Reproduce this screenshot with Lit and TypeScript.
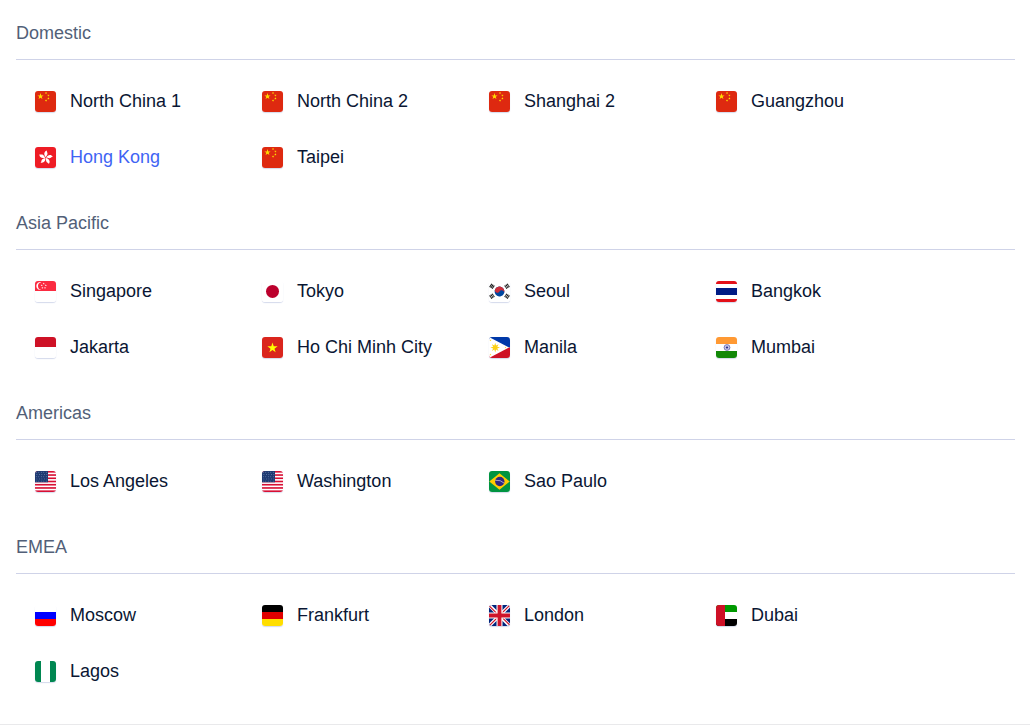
import { LitElement, html, svg, css } from "lit";
import type { SVGTemplateResult } from "lit";
import { customElement, property, state } from "lit/decorators.js";
import { classMap } from "lit/directives/class-map.js";

/** Points of a star around (cx, cy). */
const starPoints = (cx: number, cy: number, r: number, turn = 0, inner = 0.382, spikes = 5): string =>
  Array.from({ length: spikes * 2 }, (_, i) => {
    const radius = i % 2 ? r * inner : r;
    const a = ((i * 180) / spikes - 90 + turn) * (Math.PI / 180);
    return `${(cx + radius * Math.cos(a)).toFixed(2)},${(cy + radius * Math.sin(a)).toFixed(2)}`;
  }).join(" ");

const star = (cx: number, cy: number, r: number, fill: string, turn = 0) =>
  svg`<polygon points=${starPoints(cx, cy, r, turn)} fill=${fill} />`;

const band = (x: number, y: number, w: number, h: number, fill: string) =>
  svg`<rect x=${x} y=${y} width=${w} height=${h} fill=${fill} />`;

const trigram = (cx: number, cy: number, turn: number, broken: boolean) => svg`
  <g transform=${`translate(${cx} ${cy}) rotate(${turn})`} stroke="#1c1c1c" stroke-width="1.1">
    <path d="M-2 -1.5H2M-2 0H2M-2 1.5H2" />
    ${broken ? svg`<path d="M0 -2.1V2.1" stroke="#fff" stroke-width="0.4" />` : ""}
  </g>`;

const FLAGS: Record<string, SVGTemplateResult> = {
  cn: svg`${band(0, 0, 21, 21, "#de2910")}
    ${star(5.5, 5.4, 3.3, "#ffde00")}
    ${star(11, 2, 1.3, "#ffde00", 20)}${star(13.4, 4.4, 1.3, "#ffde00", 40)}
    ${star(13.4, 7.4, 1.3, "#ffde00")}${star(11, 9.6, 1.3, "#ffde00", 20)}`,
  hk: svg`${band(0, 0, 21, 21, "#ee1c25")}
    ${[0, 72, 144, 216, 288].map(
      (a) => svg`<g transform=${`translate(10.7 10.6) rotate(${a + 12})`}>
        <path d="M0 -0.4C-2.6 -2.2 -3.2 -5.6 -0.2 -7.2C-0.6 -5.8 1.2 -5.2 1 -3.6C0.9 -2.3 0.2 -1.8 0 -0.4Z" fill="#fff" />
      </g>`
    )}`,
  sg: svg`${band(0, 0, 21, 21, "#fff")}${band(0, 0, 21, 10, "#fb2b41")}
    <path d="M6.4 1.2A4 4 0 1 0 6.4 8.9A3.88 3.88 0 0 1 6.4 1.2Z" fill="#fff" />
    ${star(8.7, 2.5, 1.1, "#fff")}${star(6.7, 4.3, 1.1, "#fff")}${star(10.8, 4.3, 1.1, "#fff")}
    ${star(7.4, 6.9, 1.1, "#fff")}${star(10, 6.9, 1.1, "#fff")}`,
  jp: svg`${band(0, 0, 21, 21, "#fff")}<circle cx="10.5" cy="10.4" r="6.5" fill="#bc002d" />`,
  kr: svg`${band(0, 0, 21, 21, "#fff")}
    <g transform="rotate(30 10.5 10.5)">
      <circle cx="10.5" cy="10.5" r="4.9" fill="#0047a0" />
      <path d="M5.6 10.5A4.9 4.9 0 0 1 15.4 10.5A2.45 2.45 0 0 0 10.5 10.5A2.45 2.45 0 0 1 5.6 10.5Z" fill="#cd2e3a" />
    </g>
    ${trigram(3, 5.3, -56, false)}${trigram(18, 5.3, 56, true)}
    ${trigram(3, 15.2, 56, true)}${trigram(18, 15.2, -56, true)}`,
  th: svg`${band(0, 0, 21, 21, "#e31018")}${band(0, 3, 21, 15, "#fff")}${band(0, 7, 21, 7, "#001b84")}`,
  id: svg`${band(0, 0, 21, 21, "#fff")}${band(0, 0, 21, 10, "#ce1126")}`,
  vn: svg`${band(0, 0, 21, 21, "#da251d")}${star(10.5, 11, 5.4, "#ff0")}`,
  ph: svg`${band(0, 0, 21, 10.5, "#0038a8")}${band(0, 10.5, 21, 10.5, "#ce1126")}
    <path d="M0 0L20 10.5L0 21Z" fill="#fff" />
    <polygon points=${starPoints(6.2, 10.6, 4.8, 0, 0.45, 8)} fill="#fcd116" />
    ${star(1.5, 3.4, 1, "#fcd116")}${star(1.5, 17.6, 1, "#fcd116")}${star(16.4, 10.5, 1, "#fcd116")}`,
  in: svg`${band(0, 0, 21, 7, "#f93")}${band(0, 7, 21, 7, "#fff")}${band(0, 14, 21, 7, "#128807")}
    <circle cx="11" cy="10.5" r="2.9" fill="#dcdcf2" stroke="#4b4b9e" stroke-width="0.7" />
    <path d="M8.2 10.5H13.8M11 7.7V13.3M9 8.5L13 12.5M13 8.5L9 12.5" stroke="#8888c4" stroke-width="0.4" />
    <circle cx="11" cy="10.5" r="1.1" fill="#30308e" />`,
  us: svg`${band(0, 0, 21, 21, "#fff")}
    ${[0, 1, 2, 3, 4, 5, 6].map((i) => band(0, (i * 42) / 13, 21, 21 / 13, "#d80f34"))}
    ${band(0, 0, 13, 11.3, "#1f3a72")}
    ${Array.from({ length: 25 }, (_, i) =>
      svg`<circle cx=${1.3 + (i % 5) * 2.5 + (Math.floor(i / 5) % 2) * 0.6} cy=${1.3 + Math.floor(i / 5) * 2.2} r="0.45" fill="#8fa6c9" />`
    )}`,
  br: svg`${band(0, 0, 21, 21, "#009440")}
    <path d="M0.3 10.5L10.5 2.2L20.7 10.5L10.5 18.8Z" fill="#ffcb00" />
    <circle cx="10.8" cy="10.5" r="4.7" fill="#302681" />
    <path d="M6.3 9.3Q11.5 8.6 15.2 12.2" fill="none" stroke="#d5d0e4" stroke-width="0.7" />`,
  ru: svg`${band(0, 0, 21, 7, "#fff")}${band(0, 7, 21, 7, "#00f")}${band(0, 14, 21, 7, "#f00")}`,
  de: svg`${band(0, 0, 21, 7, "#000")}${band(0, 7, 21, 7, "#e00000")}${band(0, 14, 21, 7, "#ffde00")}`,
  gb: svg`${band(0, 0, 21, 21, "#00247d")}
    <path d="M0 0L21 21M21 0L0 21" stroke="#fff" stroke-width="3.4" />
    <path d="M0 0.6L10.5 11.1M21 0L10.5 10.5M10.5 9.9L21 20.4M10.5 10.5L0 21" stroke="#cf142b" stroke-width="1.1" />
    <path d="M10.5 0V21M0 10.5H21" stroke="#fff" stroke-width="6" />
    <path d="M10.5 0V21M0 10.5H21" stroke="#cf142b" stroke-width="3.8" />`,
  ae: svg`${band(0, 0, 21, 7, "#090")}${band(0, 7, 21, 7, "#fff")}${band(0, 14, 21, 7, "#000")}${band(0, 0, 9, 21, "#ce1126")}`,
  ng: svg`${band(0, 0, 21, 21, "#008751")}${band(6, 0, 9, 21, "#fff")}`,
};

interface Region {
  name: string;
  flag: string;
}

const GROUPS: { title: string; regions: Region[] }[] = [
  {
    title: "Domestic",
    regions: [
      { name: "North China 1", flag: "cn" },
      { name: "North China 2", flag: "cn" },
      { name: "Shanghai 2", flag: "cn" },
      { name: "Guangzhou", flag: "cn" },
      { name: "Hong Kong", flag: "hk" },
      { name: "Taipei", flag: "cn" },
    ],
  },
  {
    title: "Asia Pacific",
    regions: [
      { name: "Singapore", flag: "sg" },
      { name: "Tokyo", flag: "jp" },
      { name: "Seoul", flag: "kr" },
      { name: "Bangkok", flag: "th" },
      { name: "Jakarta", flag: "id" },
      { name: "Ho Chi Minh City", flag: "vn" },
      { name: "Manila", flag: "ph" },
      { name: "Mumbai", flag: "in" },
    ],
  },
  {
    title: "Americas",
    regions: [
      { name: "Los Angeles", flag: "us" },
      { name: "Washington", flag: "us" },
      { name: "Sao Paulo", flag: "br" },
    ],
  },
  {
    title: "EMEA",
    regions: [
      { name: "Moscow", flag: "ru" },
      { name: "Frankfurt", flag: "de" },
      { name: "London", flag: "gb" },
      { name: "Dubai", flag: "ae" },
      { name: "Lagos", flag: "ng" },
    ],
  },
];

@customElement("region-flag")
export class RegionFlag extends LitElement {
  @property() code = "";

  static styles = css`
    :host {
      display: block;
      flex: none;
      padding-top: 1px;
    }
    .flag {
      display: block;
      width: 21px;
      height: 21px;
      border-radius: 3px;
      box-shadow: 0 1px 1px rgba(40, 70, 160, 0.2);
    }
  `;

  render() {
    return html`<svg class="flag" viewBox="0 0 21 21" aria-hidden="true">${FLAGS[this.code]}</svg>`;
  }
}

@customElement("app-root")
export class AppRoot extends LitElement {
  @state() private selected = "Hong Kong";

  static styles = css`
    :host {
      display: block;
      background: #fff;
      color: #0a1633;
      font: 18px/24px "Liberation Sans", Arial, sans-serif;
    }
    .panel {
      display: flex;
      flex-direction: column;
      gap: 26px;
      padding: 21px 15px 25px 16px;
      border-bottom: 1px solid #e9e9eb;
    }
    .title {
      margin: 0;
      padding-bottom: 14px;
      border-bottom: 1px solid #cfd3e8;
      color: #525f78;
      font-size: 18px;
      font-weight: 400;
    }
    .regions {
      display: grid;
      grid-template-columns: repeat(auto-fill, 227px);
      margin: 0;
      padding: 13px 0 0 19px;
      list-style: none;
    }
    .region {
      display: flex;
      align-items: center;
      gap: 14px;
      width: 100%;
      height: 56px;
      padding: 0;
      border: 0;
      background: none;
      color: inherit;
      font: inherit;
      text-align: left;
      cursor: pointer;
    }
    .region:hover,
    .selected {
      color: #3f64f4;
    }
  `;

  render() {
    return html`
      <main class="panel">
        ${GROUPS.map(
          (group) => html`
            <section>
              <h2 class="title">${group.title}</h2>
              <ul class="regions">
                ${group.regions.map(
                  (region) => html`
                    <li>
                      <button
                        type="button"
                        class=${classMap({ region: true, selected: region.name === this.selected })}
                        aria-pressed=${region.name === this.selected ? "true" : "false"}
                        @click=${() => (this.selected = region.name)}
                      >
                        <region-flag code=${region.flag}></region-flag>
                        <span>${region.name}</span>
                      </button>
                    </li>
                  `
                )}
              </ul>
            </section>
          `
        )}
      </main>
    `;
  }
}
